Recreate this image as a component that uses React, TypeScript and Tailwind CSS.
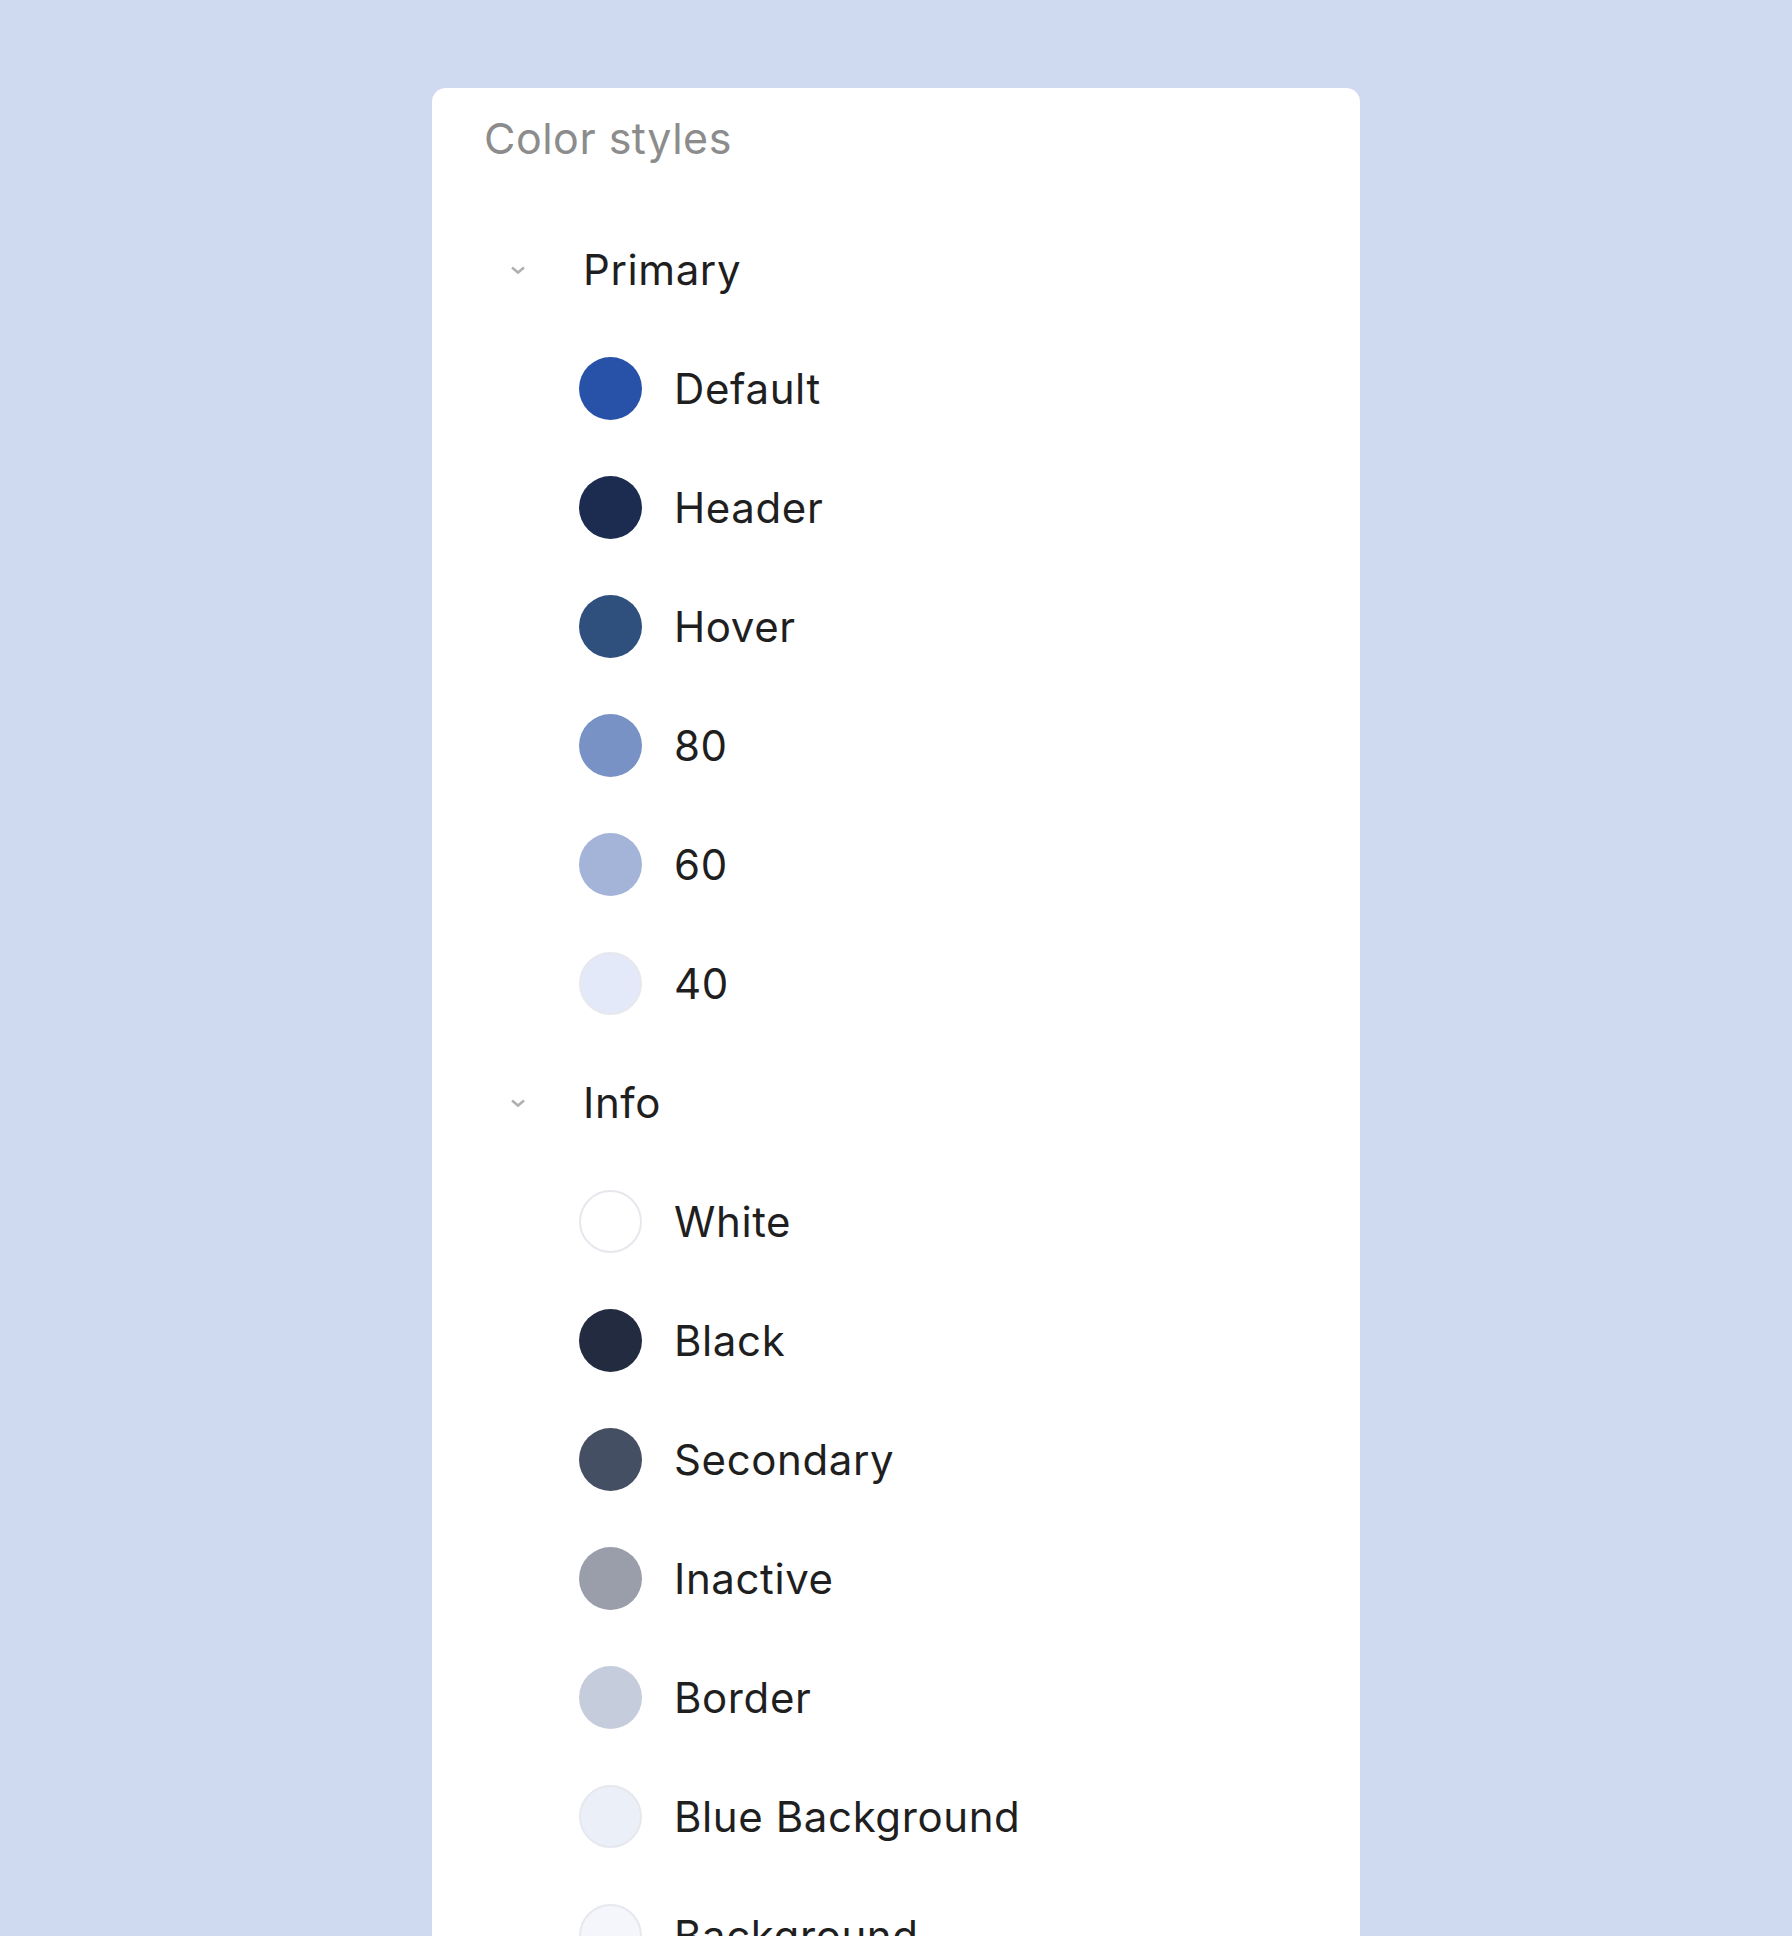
const GROUPS = [
  {
    name: 'Primary',
    colors: [
      { label: 'Default', hex: '#2852a8' },
      { label: 'Header', hex: '#1c2b50' },
      { label: 'Hover', hex: '#2f4f7d' },
      { label: '80', hex: '#7892c6' },
      { label: '60', hex: '#a3b4d8' },
      { label: '40', hex: '#e3e9f8', ring: true },
    ],
  },
  {
    name: 'Info',
    colors: [
      { label: 'White', hex: '#ffffff', ring: true },
      { label: 'Black', hex: '#222b40' },
      { label: 'Secondary', hex: '#454f63' },
      { label: 'Inactive', hex: '#9a9eaa' },
      { label: 'Border', hex: '#c5ccdc' },
      { label: 'Blue Background', hex: '#ebeff8', ring: true },
      { label: 'Background', hex: '#f4f6fb', ring: true },
    ],
  },
];

function Chevron() {
  return (
    <svg width="20" height="12" viewBox="0 0 20 12" fill="none" className="shrink-0">
      <path d="M4 3.5 L10 8.5 L16 3.5" stroke="#b0b0b0" strokeWidth="2.6" />
    </svg>
  );
}

export default function App() {
  return (
    <div className="min-h-screen overflow-hidden bg-[#cfdaf1] pt-[88px] font-['Inter',sans-serif]">
      <div className="mx-auto w-[928px] rounded-[14px] bg-white pb-[200px]">
        <div className="pl-[52px] pt-[26px] pb-[48px] text-[43px] leading-[48px] tracking-[0.5px] text-[#8c8c8c]">
          Color styles
        </div>

        {GROUPS.map((group) => (
          <div key={group.name}>
            <div className="flex h-[119px] items-center pl-[76px]">
              <Chevron />
              <span className="ml-[55px] text-[42px] leading-none tracking-[0.6px] text-[#1f1f1f]">
                {group.name}
              </span>
            </div>
            {group.colors.map((c) => (
              <div key={c.label} className="flex h-[119px] items-center pl-[147px]">
                <span
                  className={
                    c.ring
                      ? 'h-[63px] w-[63px] shrink-0 rounded-full border-2 border-[#e6e8ee]'
                      : 'h-[63px] w-[63px] shrink-0 rounded-full'
                  }
                  style={{ backgroundColor: c.hex }}
                />
                <span className="ml-[32px] text-[42px] leading-none tracking-[0.6px] text-[#1f1f1f]">
                  {c.label}
                </span>
              </div>
            ))}
          </div>
        ))}
      </div>
    </div>
  );
}
